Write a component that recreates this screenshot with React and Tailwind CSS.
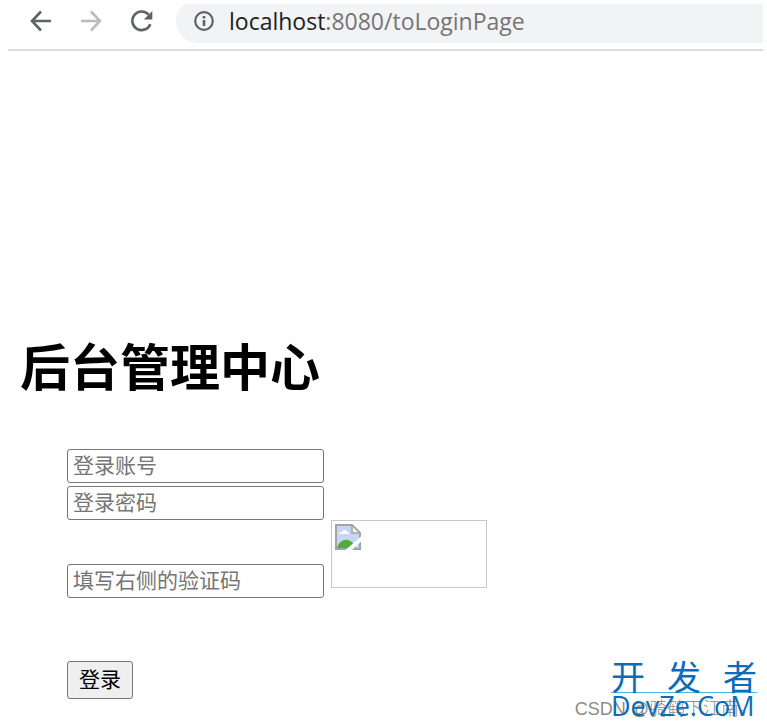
import React from "react";

const BackIcon = () => (
  <svg width="22" height="22" viewBox="0 0 22 22" fill="none" stroke="currentColor" strokeWidth="2.6">
    <path d="M21 11H2.5M11 1.5L2 11l9 9.5" />
  </svg>
);

const ForwardIcon = () => (
  <svg width="22" height="22" viewBox="0 0 22 22" fill="none" stroke="currentColor" strokeWidth="2.6">
    <path d="M1 11h18.5M11 1.5L20 11l-9 9.5" />
  </svg>
);

const ReloadIcon = () => (
  <svg width="24" height="22" viewBox="0 0 24 22" fill="none">
    <path d="M20.3 14.2A9.3 9.3 0 1 1 18.6 4.6" stroke="currentColor" strokeWidth="2.6" />
    <path d="M22.3 1v8.5h-8.5z" fill="currentColor" />
  </svg>
);

const InfoIcon = () => (
  <svg width="20" height="20" viewBox="0 0 20 20" fill="none">
    <circle cx="10" cy="10" r="8.8" stroke="currentColor" strokeWidth="2.2" />
    <path d="M10 9v6M10 5v2.4" stroke="currentColor" strokeWidth="2.6" />
  </svg>
);

const BrokenImageIcon = () => (
  <svg width="26" height="26" viewBox="0 0 26 26">
    <path d="M1 1h16l8 8v16H1z" fill="#c5d6f7" />
    <path d="M4 10c0-2 2-2 3-2 1-3 5-2 5 0 2 0 2 2 2 2z" fill="#fff" />
    <path d="M2 24c2-6 6-9 11-8 4 1 6 4 8 8z" fill="#55ab38" />
    <path d="M1 1h16l8 8v16H1z" fill="none" stroke="#a3a3a3" strokeWidth="2" />
    <path d="M17 1v8h8z" fill="#f2f2f2" stroke="#a3a3a3" strokeWidth="1.6" />
    <path d="M10.5 26L26 12.5v5L17 26z" fill="#fff" />
  </svg>
);

const Toolbar = () => (
  <header className="mx-1 ml-2 mt-1 flex h-[47px] items-start overflow-hidden border-b-2 border-[#dcdce2]">
    <div className="flex h-[34px] shrink-0 items-center gap-7 pl-[22px] text-[#5f6368]">
      <button type="button" aria-label="Back"><BackIcon /></button>
      <button type="button" aria-label="Forward" className="text-[#babcbe]"><ForwardIcon /></button>
      <button type="button" aria-label="Reload"><ReloadIcon /></button>
    </div>
    <div className="-mt-1 ml-[22px] flex h-[43px] min-w-0 flex-1 items-center gap-[15px] rounded-l-full bg-[#f1f3f4] pb-0.5 pl-[18px] text-[#5f6368]">
      <InfoIcon />
      <a href="#" className="font-['Open_Sans',sans-serif] text-[23px] leading-8 text-[#757575]">
        <span className="text-[#202124]">localhost</span>:8080/toLoginPage
      </a>
    </div>
  </header>
);

const Field = ({ label, type = "text" }) => (
  <input
    type={type}
    aria-label={label}
    placeholder={label}
    className="block h-[34px] w-[257px] rounded-[3px] border border-[#767676] bg-white px-[5px] text-[21px] leading-7 outline-none placeholder:text-[#757575]"
  />
);

const Watermark = () => (
  <div className="absolute right-[10px] bottom-1 w-[146px]">
    <span className="absolute right-0 bottom-0 text-lg leading-7 font-light whitespace-nowrap text-[#8c8c8c]">
      CSDN @骑鹤下江南。
    </span>
    <div className="relative pb-1 text-[#0d6cb8]">
      <div className="flex justify-between border-b border-[#4ab4e8] text-[34px] leading-7">
        <span>开</span>
        <span>发</span>
        <span>者</span>
      </div>
      <div className="font-['Open_Sans',sans-serif] text-[27px] leading-[26px] font-medium">DevZe.CoM</div>
    </div>
  </div>
);

export default function App() {
  return (
    <div className="relative min-h-screen overflow-hidden bg-white font-['Liberation_Sans','Noto_Sans_CJK_SC',sans-serif] text-black">
      <Toolbar />
      <main className="pt-[282px]">
        <h1 className="pl-5 text-[50px] leading-[72px] font-bold">后台管理中心</h1>
        <form className="pt-11 pl-[67px]" onSubmit={(e) => e.preventDefault()}>
          <div className="flex flex-col gap-[3px]">
            <Field label="登录账号" />
            <Field label="登录密码" type="password" />
          </div>
          <div className="flex items-start gap-[7px]">
            <div className="pt-11">
              <Field label="填写右侧的验证码" />
            </div>
            <div role="img" aria-label="captcha" className="h-[68px] w-[156px] border border-[#c8c8c8] p-[3px]">
              <BrokenImageIcon />
            </div>
          </div>
          <button
            type="submit"
            className="mt-[63px] block h-[38px] w-[66px] rounded-[3px] border border-[#767676] bg-[#efefef] text-[21px] leading-8"
          >
            登录
          </button>
        </form>
      </main>
      <Watermark />
    </div>
  );
}
